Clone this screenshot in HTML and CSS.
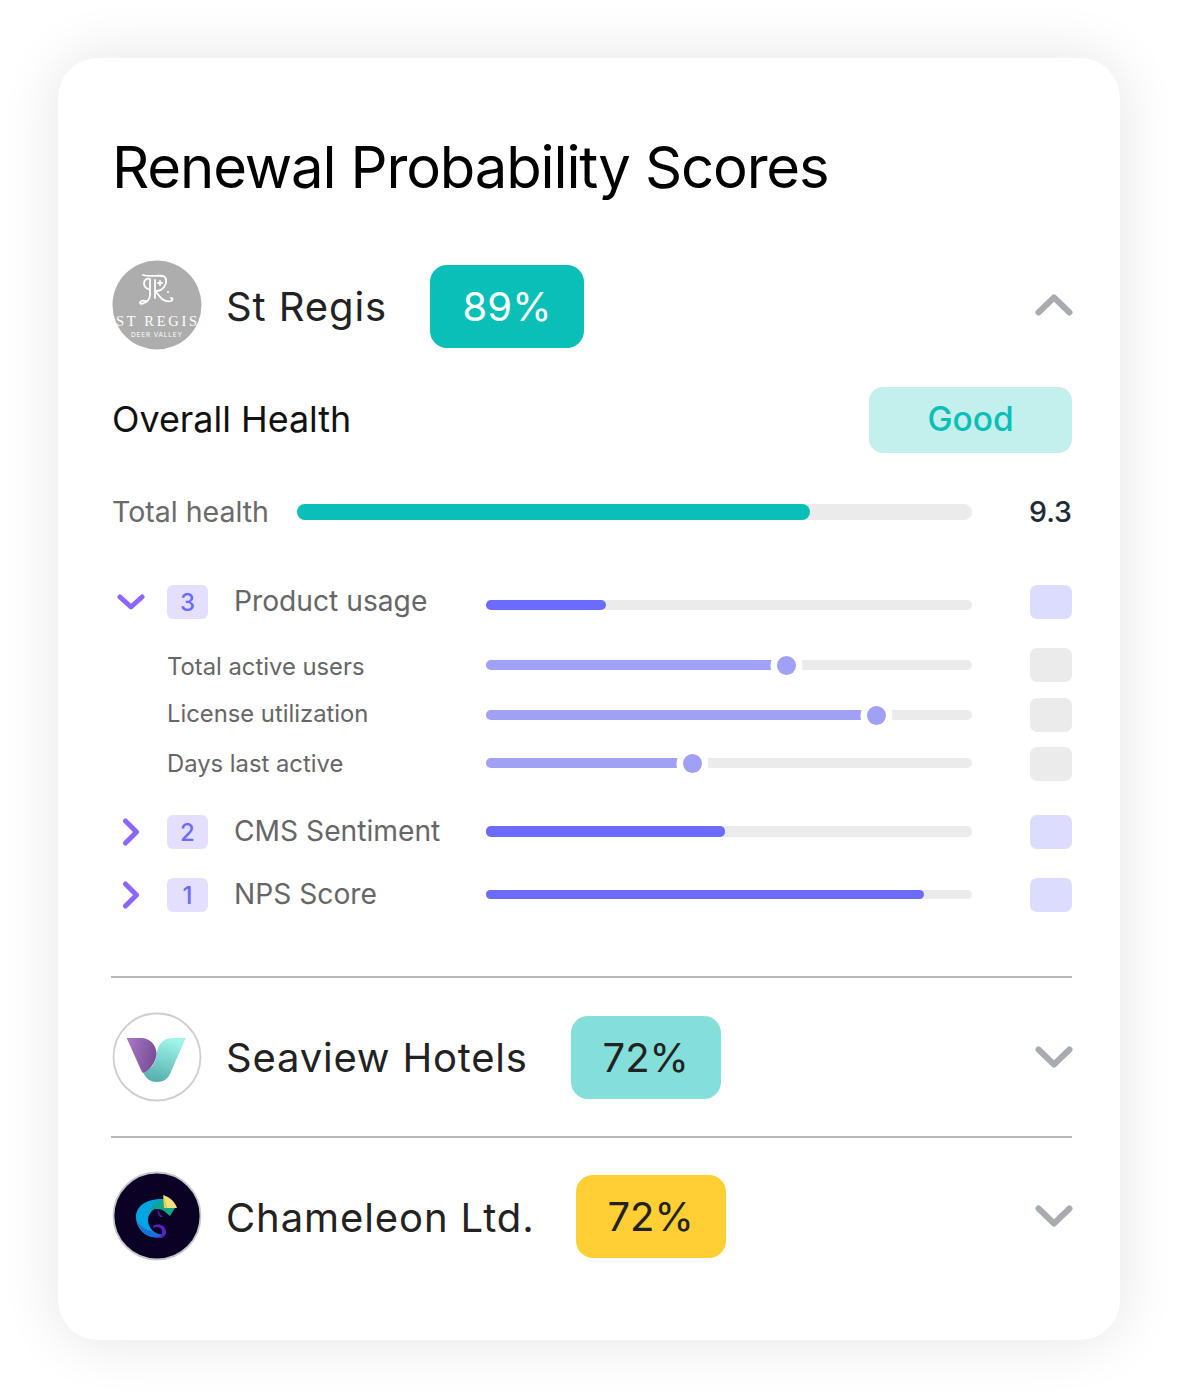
FILE: index.html
```html
<!DOCTYPE html>
<html lang="en">
<head>
<meta charset="utf-8">
<title>Renewal Probability Scores</title>
<link rel="stylesheet" href="styles.css">
</head>
<body>
<main class="card">
  <h1 class="title">Renewal Probability Scores</h1>

  <section class="company company-open">
    <svg class="avatar" viewBox="0 0 90 90">
      <circle cx="45" cy="45" r="44.500" fill="#adadad"/>
      <g fill="none" stroke="#fff" stroke-width="1.800" stroke-linecap="round">
        <path d="M31 15c6 2 14 0 20 1 4 1 4 7 1 11-2 3-5 4-8 4"/>
        <path d="M38 20v15c0 4-3 7-6 8-2 1-4 1-4 0 0-2 3-3 6-2"/>
        <path d="M43 20v18"/>
        <path d="M38 19c-3-1-6 1-6 4 0 4 3 6 6 7"/>
        <path d="M43 31l7 8c3 2 6 3 9 2 2-1 2-3 0-3"/>
        <path d="M46 23h4M48 21v4"/>
      </g>
      <circle cx="56" cy="32" r="1" fill="#fff"/>
      <text class="logo-name" x="4" y="66" textLength="81" lengthAdjust="spacing">ST REGIS</text>
      <text class="logo-sub" x="19" y="77" textLength="51" lengthAdjust="spacing">DEER VALLEY</text>
    </svg>
    <span class="company-name">St Regis</span>
    <span class="score score-high">89%</span>
    <svg class="toggle" viewBox="0 0 38 22"><path d="M3.500 18.500 19 3.500 34.500 18.500"/></svg>
  </section>

  <div class="health-head">
    <span class="health-title">Overall Health</span>
    <span class="health-pill">Good</span>
  </div>

  <div class="total">
    <span class="total-label">Total health</span>
    <div class="track track-total"><div class="fill fill-total" style="width:513px"></div></div>
    <span class="total-value">9.3</span>
  </div>

  <div class="metrics">
    <div class="metric metric-first">
      <svg class="caret" viewBox="0 0 28 28"><path d="M3 9 14 19 25 9"/></svg>
      <span class="count">3</span>
      <span class="metric-label">Product usage</span>
      <div class="track track-down"><div class="fill" style="width:120px"></div></div>
      <span class="box"></span>
    </div>
    <div class="sub sub-1">
      <span class="sub-label">Total active users</span>
      <div class="track"><div class="fill fill-soft" style="width:300px"><i class="thumb"></i></div></div>
      <span class="box box-grey"></span>
    </div>
    <div class="sub sub-2">
      <span class="sub-label">License utilization</span>
      <div class="track"><div class="fill fill-soft" style="width:390px"><i class="thumb"></i></div></div>
      <span class="box box-grey"></span>
    </div>
    <div class="sub sub-3">
      <span class="sub-label">Days last active</span>
      <div class="track"><div class="fill fill-soft" style="width:206px"><i class="thumb"></i></div></div>
      <span class="box box-grey"></span>
    </div>
    <div class="metric metric-cms">
      <svg class="caret" viewBox="0 0 28 28"><path d="M8.500 3 19.500 14 8.500 25"/></svg>
      <span class="count">2</span>
      <span class="metric-label">CMS Sentiment</span>
      <div class="track track-cms"><div class="fill" style="width:239px"></div></div>
      <span class="box"></span>
    </div>
    <div class="metric metric-nps">
      <svg class="caret" viewBox="0 0 28 28"><path d="M8.500 3 19.500 14 8.500 25"/></svg>
      <span class="count">1</span>
      <span class="metric-label">NPS Score</span>
      <div class="track track-nps"><div class="fill" style="width:438px"></div></div>
      <span class="box"></span>
    </div>
  </div>

  <section class="company company-seaview">
    <svg class="avatar" viewBox="0 0 90 90">
      <defs>
        <linearGradient id="leafPurple" x1="0" y1="0" x2="1" y2="0.3"><stop offset="0" stop-color="#a878c8"/><stop offset="1" stop-color="#7a5098"/></linearGradient>
        <linearGradient id="leafTeal" x1="0.6" y1="0" x2="0.3" y2="1"><stop offset="0" stop-color="#a0f5ea"/><stop offset="1" stop-color="#55aeae"/></linearGradient>
      </defs>
      <circle cx="45" cy="45" r="43.500" fill="#fff" stroke="#cfcfcf" stroke-width="1.800"/>
      <path fill="url(#leafTeal)" d="M73.700 26H60C50 26 45 35 44.500 43 44 52 38 58 31 60 34 67 39 70 45 70 51 70 56 67 58 62Z"/>
      <path fill="url(#leafPurple)" d="M14.700 26H29C38 26 44 33 44.500 41 44.500 50 38 58 31 61 30 60 29.500 59 29 58Z"/>
    </svg>
    <span class="company-name">Seaview Hotels</span>
    <span class="score score-mid">72%</span>
    <svg class="toggle" viewBox="0 0 38 22"><path d="M3.500 3.500 19 18.500 34.500 3.500"/></svg>
  </section>

  <section class="company company-chameleon">
    <svg class="avatar" viewBox="0 0 90 90">
      <circle cx="45" cy="45" r="43.500" fill="#0a0124" stroke="#c8c8cc" stroke-width="1.800"/>
      <path fill="#00a4e0" d="M53 28C36 27 24 34 24 46 24 56 31 64 40 66 45 67 49 66 52 64 44 64 36 58 36 49 36 42 42 37 50 34Z"/>
      <path fill="#1c6fd8" d="M24.500 49C28 56 35 60 41 60 45 63 48 64 52 64 49 66 45 67 40 66 32 64 26 57 24.500 49Z"/>
      <path fill="#0fa58f" d="M52 28C46 30 40 34 38 39 44 37 50 38 52 40L58 45 63 37Z"/>
      <path fill="#4a1fb0" d="M46 38C47 41 48 44 51 46H48C46 44 45 41 46 38Z"/>
      <path fill="#5a20c0" d="M41 55C45 52 53 53 54 60 55 66 48 69 42 66 47 67 51 64 50 60 49 56 45 55 41 57Z"/>
      <path fill="#f8e080" d="M51 24C58 26 63 31 65 37H55Z"/>
      <path fill="#ffcc33" d="M51 24 55 37H52Z"/>
    </svg>
    <span class="company-name">Chameleon Ltd.</span>
    <span class="score score-warn">72%</span>
    <svg class="toggle" viewBox="0 0 38 22"><path d="M3.500 3.500 19 18.500 34.500 3.500"/></svg>
  </section>
</main>
</body>
</html>
```
FILE: styles.css
```css
* { box-sizing: border-box; }

html, body { margin: 0; background: #fff; }

body {
  padding: 58px;
  width: 1178px;
  height: 1398px;
  overflow: hidden;
  font-family: Inter, "Liberation Sans", sans-serif;
}

.card {
  width: 1062px;
  height: 1282px;
  padding: 0 48px 0 53px;
  background: #fff;
  border-radius: 40px;
  box-shadow: 0 0 58px rgba(0, 0, 0, 0.11);
}

.title {
  margin: 0;
  padding: 73px 0 0 1px;
  height: 202px;
  font-size: 58px;
  line-height: 72px;
  font-weight: 400;
  letter-spacing: -1.140px;
  color: #000;
}

.company {
  display: flex;
  align-items: center;
  height: 90px;
}

.avatar {
  width: 90px;
  height: 90px;
  margin-left: 1px;
  flex: none;
}

.logo-name {
  font-family: "Liberation Serif", serif;
  font-size: 14.500px;
  fill: #fff;
}

.logo-sub {
  font-family: Inter, sans-serif;
  font-size: 6.500px;
  fill: #fff;
}

.company-name {
  margin-left: 24px;
  font-size: 40px;
  letter-spacing: 0.800px;
  color: #222;
}

.score {
  margin-left: 43px;
  width: 150px;
  height: 83px;
  display: flex;
  align-items: center;
  justify-content: center;
  border-radius: 17px;
  font-size: 40px;
  color: #222;
}

.score-high { width: 154px; background: #0abfb8; color: #fff; }
.score-mid { background: #84ded9; }
.score-warn { margin-left: 41px; background: #ffcf33; }

.company-open .company-name,
.company-open .score { margin-top: 2px; }

.company-open .company-name { letter-spacing: 0.900px; }
.company-chameleon .company-name { letter-spacing: 0.900px; margin-top: 2px; }

.toggle {
  margin-left: auto;
  margin-right: -1px;
  width: 38px;
  height: 22px;
  flex: none;
  fill: none;
  stroke: #a8abb0;
  stroke-width: 6;
  stroke-linecap: round;
  stroke-linejoin: round;
}

.health-head {
  display: flex;
  align-items: center;
  justify-content: space-between;
  height: 66px;
  margin-top: 37px;
  padding-left: 1px;
}

.health-title { font-size: 35.900px; color: #111; padding-bottom: 2px; }

.health-pill {
  width: 203px;
  height: 66px;
  padding-bottom: 2px;
  display: flex;
  align-items: center;
  justify-content: center;
  border-radius: 14px;
  background: #c3efec;
  color: #0abfb8;
  font-size: 33.500px;
  font-weight: 500;
}

.total {
  display: grid;
  grid-template-columns: 185px 675px 1fr;
  align-items: center;
  height: 32px;
  margin-top: 41px;
  padding-left: 1px;
}

.total-label { font-size: 28.500px; color: #6a6a6a; white-space: nowrap; }
.total-value { font-size: 28.500px; font-weight: 500; color: #1e2a38; text-align: right; }

.track {
  height: 10px;
  border-radius: 5px;
  background: #ebebeb;
}

.track-total { height: 16px; border-radius: 8px; }

.track-down { transform: translateY(3px); }
.track-cms { height: 11px; transform: translateY(-1px); }
.track-nps { height: 9px; transform: translateY(-1px); }

.fill {
  position: relative;
  height: 100%;
  border-radius: 5px;
  background: #6b6bff;
}

.fill-total { border-radius: 8px; background: #0abfb8; }
.fill-soft { border-radius: 5px 0 0 5px; background: #a0a0f5; }

.thumb {
  position: absolute;
  right: -9.500px;
  top: -4.500px;
  width: 19px;
  height: 19px;
  border-radius: 50%;
  background: #a0a0f5;
  box-shadow: 0 0 0 6.500px #fff;
}

.metrics { margin-top: 58px; height: 392px; }

.metric, .sub {
  display: grid;
  grid-template-columns: 56px 67px 252px 486px 1fr;
  align-items: center;
  height: 34px;
}

.sub { grid-template-columns: 321px 486px 1fr; padding-left: 54px; }

.sub-1 { margin-top: 30px; }
.sub-2 { margin-top: 16px; }
.sub-3 { margin-top: 15px; }
.metric-cms { margin-top: 33px; }
.metric-nps { margin-top: 29px; }

.sub-1 .sub-label { padding-top: 2px; }
.sub-2 .sub-label { padding-bottom: 3px; }
.sub-3 .sub-label { padding-bottom: 1px; }
.sub-3 .track { transform: translateY(-1px); }

.caret {
  width: 28px;
  height: 28px;
  margin-left: 6px;
  fill: none;
  stroke: #8b66ff;
  stroke-width: 5;
  stroke-linecap: round;
  stroke-linejoin: round;
}

.count {
  width: 41px;
  height: 34px;
  display: flex;
  align-items: center;
  justify-content: center;
  border-radius: 6px;
  background: #e5dfff;
  color: #6b6bff;
  font-size: 24px;
  font-weight: 500;
}

.metric-label { font-size: 28.200px; color: #666; white-space: nowrap; padding-bottom: 2px; }
.sub-label { font-size: 23.800px; color: #666; white-space: nowrap; padding-left: 2px; }

.box {
  justify-self: end;
  width: 42px;
  height: 34px;
  border-radius: 7px;
  background: #dcdcff;
}

.box-grey { background: #ebebeb; }

.company-seaview {
  height: 160px;
  border-top: 2px solid #b8b8b8;
}

.company-chameleon {
  height: 158px;
  border-top: 2px solid #b8b8b8;
}
```
